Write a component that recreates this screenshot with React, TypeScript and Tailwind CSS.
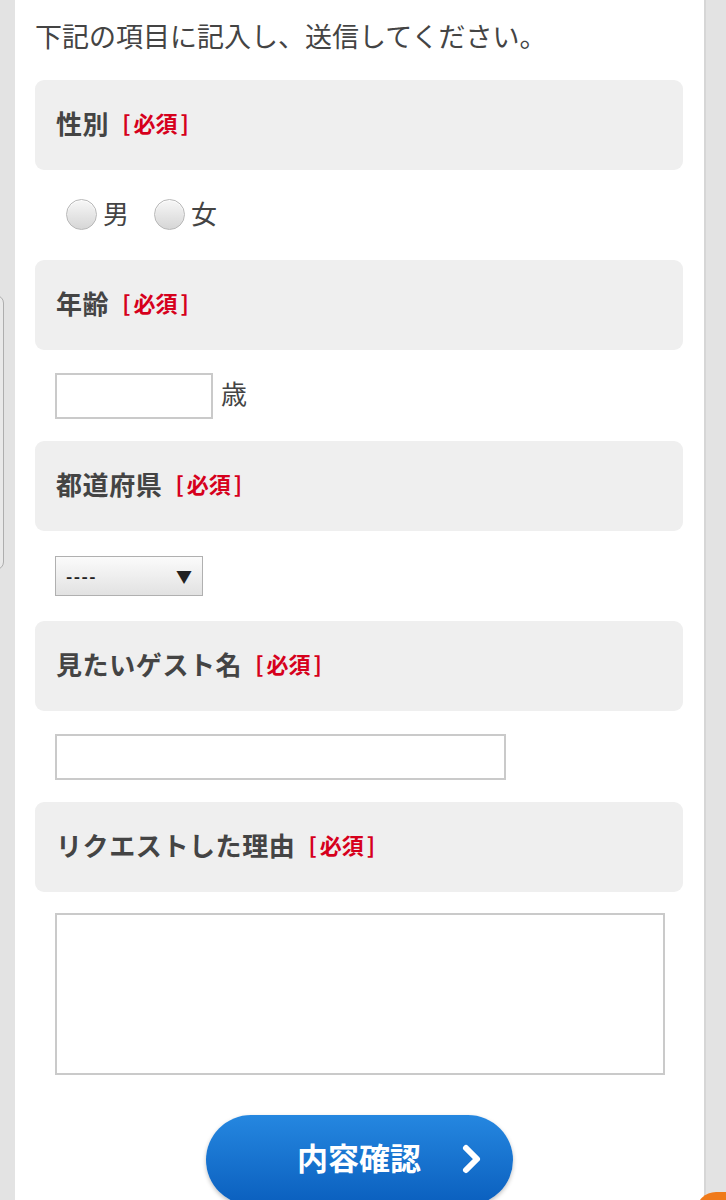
import { useState } from 'react'

const Required = () => (
  <span className="ml-[13px] text-[22px] font-bold text-[#d6001c]">
    [<span className="mx-[3px]">必須</span>]
  </span>
)

function SectionHead({ label }: { label: string }) {
  return (
    <div className="flex h-[90px] items-center rounded-[9px] bg-[#efefef] pb-[5px] pl-[21px]">
      <span className="text-[26px] font-bold tracking-[0.6px] text-[#444]">{label}</span>
      <Required />
    </div>
  )
}

export default function App() {
  const [sex, setSex] = useState('')

  return (
    <div
      className="relative flex h-[1200px] overflow-hidden bg-[#e3e3e3]"
      style={{ fontFamily: '"Noto Sans CJK JP", "Noto Sans", sans-serif' }}
    >
      {/* side handle */}
      <div className="absolute left-[-12px] top-[295px] h-[275px] w-[16px] rounded-r-[8px] border border-[#aeaeae] bg-[#e9e9e9]" />

      <div className="ml-[15px] w-[691px] border-r-2 border-[#d6d6d6] bg-white pl-[20px] pr-[21px] pt-[15px]">
        <p className="text-[27px] leading-[42px] text-[#444]">下記の項目に記入し、送信してください。</p>

        <div className="mt-[23px]">
          <SectionHead label="性別" />
          <div className="flex h-[90px] items-center pb-[2px] pl-[31px] text-[26px] text-[#444]">
            {['男', '女'].map((v) => (
              <label key={v} className="mr-[25px] flex items-center gap-[6px]">
                <input
                  type="radio"
                  name="sex"
                  checked={sex === v}
                  onChange={() => setSex(v)}
                  className="h-[31px] w-[31px] appearance-none rounded-full border border-[#b8b8b8] bg-gradient-to-b from-[#f7f7f7] to-[#d6d6d6] shadow-[inset_0_1px_1px_rgba(255,255,255,0.9)]"
                />
                <span className="-mt-[3px]">{v}</span>
              </label>
            ))}
          </div>

          <SectionHead label="年齢" />
          <div className="flex h-[91px] items-center pl-[20px]">
            <input type="text" className="h-[46px] w-[158px] border-2 border-[#cacaca] bg-white outline-none" />
            <span className="mb-[6px] ml-[8px] text-[26px] text-[#444]">歳</span>
          </div>

          <SectionHead label="都道府県" />
          <div className="flex h-[90px] items-center pl-[20px]">
            <div className="flex h-[40px] w-[148px] items-center justify-between border border-[#b0b0b0] bg-gradient-to-b from-[#fbfbfb] to-[#e2e2e2] pl-[10px] pr-[10px] text-[#222]">
              <span className="text-[17px] font-bold tracking-[1.5px]">----</span>
              <span className="text-[16px]">▼</span>
            </div>
          </div>

          <SectionHead label="見たいゲスト名" />
          <div className="flex h-[91px] items-center pl-[20px]">
            <input type="text" className="h-[46px] w-[451px] border-2 border-[#cacaca] bg-white outline-none" />
          </div>

          <SectionHead label="リクエストした理由" />
          <div className="pl-[20px] pt-[21px]">
            <textarea className="block h-[162px] w-[610px] resize-none border-2 border-[#cacaca] bg-white outline-none" />
          </div>

          <div className="mt-[40px] flex justify-center">
            <button className="relative flex h-[90px] w-[307px] items-start justify-center rounded-full bg-gradient-to-b from-[#2587e0] to-[#0a5fbe] pt-[19px] shadow-[0_2px_4px_rgba(0,0,0,0.25)]">
              <span className="text-[31px] font-bold leading-[46px] text-white">内容確認</span>
              <svg
                className="absolute left-[254px] top-[28px]"
                width="24"
                height="32"
                viewBox="0 0 24 32"
                fill="none"
              >
                <path d="M6 5 L17 16 L6 27" stroke="white" strokeWidth="6" strokeLinecap="round" strokeLinejoin="round" />
              </svg>
            </button>
          </div>
        </div>
      </div>

      {/* floating orange corner */}
      <div className="absolute right-[-30px] top-[1192px] h-[40px] w-[60px] rounded-full bg-[#f07a1a]" />
    </div>
  )
}
